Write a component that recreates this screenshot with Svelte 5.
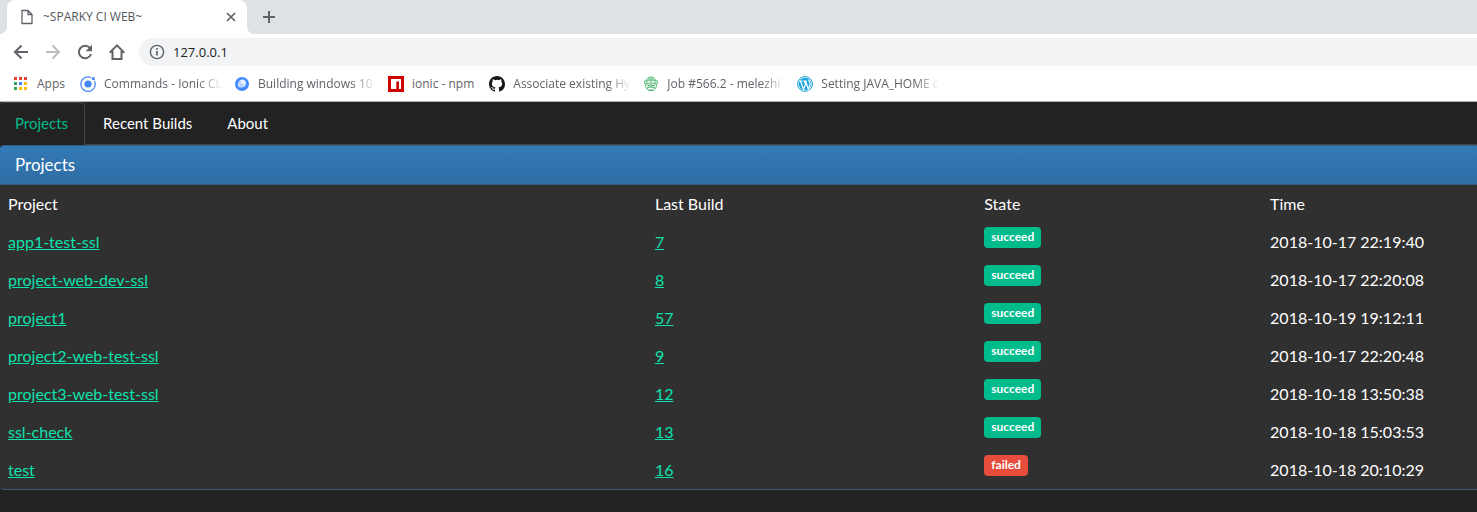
<script>
  const bookmarks = [
    { icon: 'apps', label: 'Apps', cls: '' },
    { icon: 'ionic', label: 'Commands - Ionic CL', cls: 'fade' },
    { icon: 'cordova', label: 'Building windows 10', cls: 'fade' },
    { icon: 'npm', label: 'ionic - npm', cls: '' },
    { icon: 'github', label: 'Associate existing Hy', cls: 'fade' },
    { icon: 'travis', label: 'Job #566.2 - melezhi', cls: 'fade' },
    { icon: 'wordpress', label: 'Setting JAVA_HOME c', cls: 'fade' },
  ];
  const dots = ['#ea4335', '#ea4335', '#ea4335', '#34a053', '#4285f4', '#fbbc05', '#34a053', '#fbbc05', '#fbbc05'];
  const projects = [
    { name: 'app1-test-ssl', build: 7, state: 'succeed', time: '2018-10-17 22:19:40' },
    { name: 'project-web-dev-ssl', build: 8, state: 'succeed', time: '2018-10-17 22:20:08' },
    { name: 'project1', build: 57, state: 'succeed', time: '2018-10-19 19:12:11' },
    { name: 'project2-web-test-ssl', build: 9, state: 'succeed', time: '2018-10-17 22:20:48' },
    { name: 'project3-web-test-ssl', build: 12, state: 'succeed', time: '2018-10-18 13:50:38' },
    { name: 'ssl-check', build: 13, state: 'succeed', time: '2018-10-18 15:03:53' },
    { name: 'test', build: 16, state: 'failed', time: '2018-10-18 20:10:29' },
  ];
</script>

<header class="browser">
  <div class="strip">
    <div class="tab">
      <svg width="12" height="16" viewBox="0 0 12 16" fill="none" stroke="#5f6368" stroke-width="1.3"><path d="M1 1.5h6l4 4v9H1zM7 1.5v4h4" /></svg>
      <span class="title">~SPARKY CI WEB~</span>
      <button aria-label="Close tab"><svg width="10" height="10" viewBox="0 0 10 10" stroke="#5f6368" stroke-width="1.7"><path d="M1 1l8 8M9 1L1 9" /></svg></button>
    </div>
    <button class="new" aria-label="New tab"><svg width="12" height="12" viewBox="0 0 12 12" stroke="#5f6368" stroke-width="2"><path d="M6 0v12M0 6h12" /></svg></button>
  </div>
  <div class="toolbar">
    <button aria-label="Back"><svg width="16" height="16" viewBox="0 0 16 16" fill="none" stroke="#5f6368" stroke-width="2"><path d="M15 8H2.500M8.500 1.500L2 8l6.500 6.500" /></svg></button>
    <button aria-label="Forward"><svg width="16" height="16" viewBox="0 0 16 16" fill="none" stroke="#bcbec0" stroke-width="2"><path d="M1 8h12.500M7.500 1.500L14 8l-6.500 6.500" /></svg></button>
    <button aria-label="Reload"><svg width="16" height="16" viewBox="0 0 16 16"><path d="M13 4.200A6.200 6.200 0 1 0 14 10" fill="none" stroke="#5f6368" stroke-width="2" /><path d="M15 .8v6.400H8.600z" fill="#5f6368" /></svg></button>
    <button aria-label="Home"><svg width="16" height="16" viewBox="0 0 16 16" fill="none" stroke="#5f6368" stroke-width="2"><path d="M.7 8.700L8 1.400l7.300 7.300M3.500 7v8h9V7" /></svg></button>
    <label class="address">
      <svg width="16" height="16" viewBox="0 0 16 16" fill="none" stroke="#5f6368" stroke-width="1.4"><circle cx="8" cy="8" r="6.600" /><path d="M8 7v4.500M8 4v1.700" stroke-width="1.700" /></svg>
      <input aria-label="Address" value="127.0.0.1" />
    </label>
  </div>
  <nav class="bookmarks" aria-label="Bookmarks">
    {#each bookmarks as b}
      <a href="#bookmark" class={b.cls}>
        <svg width="16" height="16" viewBox="0 0 16 16">
          {#if b.icon === 'apps'}
            {#each dots as c, i}<rect x={1 + (i % 3) * 5} y={1 + Math.floor(i / 3) * 5} width="3" height="3" fill={c} />{/each}
          {:else if b.icon === 'ionic'}
            <path d="M11.200 1.700A7.200 7.200 0 1 0 14.500 5" fill="none" stroke="#4b8bf5" stroke-width="1.300" /><circle cx="8" cy="8" r="3.600" fill="#4285f4" /><circle cx="13.300" cy="2.700" r="1.600" fill="#4b8bf5" />
          {:else if b.icon === 'cordova'}
            <circle cx="8" cy="8" r="7" fill="#448aff" /><path d="M6 4.300C8 2.900 11 3.500 11.800 6c.7 2.600-.8 4.900-3.300 5.300-2.100.5-4.700-.4-4.700-1.900C3.800 8.300 4.600 5.300 6 4.300z" fill="#e6f0ff" /><path d="M6.200 5.200c-1 2.800 1.200 4.800 4.600 3.700M4.300 8.500c.8 1.200 2 1.800 3.500 1.900" fill="none" stroke="#79aaff" stroke-width=".9" />
          {:else if b.icon === 'npm'}
            <path d="M0 0h16v16H0z" fill="#c00" /><path d="M3 3h10v10h-2V5.500H8.300V13H3z" fill="#fff" />
          {:else if b.icon === 'github'}
            <path fill="#191717" d="M8 0C3.580 0 0 3.580 0 8c0 3.540 2.290 6.530 5.470 7.590.4.070.55-.17.55-.38 0-.19-.01-.82-.01-1.490-2.010.37-2.530-.49-2.690-.94-.09-.23-.48-.94-.82-1.130-.28-.15-.68-.52-.01-.53.63-.01 1.080.58 1.230.82.72 1.210 1.870.87 2.330.66.07-.52.28-.87.51-1.070-1.780-.2-3.640-.89-3.640-3.950 0-.87.31-1.590.82-2.150-.08-.2-.36-1.020.08-2.120 0 0 .67-.21 2.200.82a7.400 7.400 0 0 1 4 0c1.530-1.040 2.200-.82 2.200-.82.44 1.100.16 1.920.08 2.120.51.56.82 1.270.82 2.150 0 3.070-1.870 3.750-3.650 3.950.29.25.54.73.54 1.480 0 1.070-.01 1.930-.01 2.200 0 .21.15.46.55.38A8.010 8.010 0 0 0 16 8c0-4.420-3.580-8-8-8z" />
          {:else if b.icon === 'travis'}
            <g fill="none" stroke="#45b066" stroke-width=".9"><path d="M3.500 3.800C5 .2 11 .2 12.500 3.800" /><path d="M1.500 5c4-1.300 9-1.300 13 0l-.5 3c-4-1.300-8-1.300-12 0zM2.700 8v2.500c1 5.500 9.600 5.500 10.600 0V8M6 1.500v3M10 1.500v3M8 1v5.500M4 5v2M12 5v2" /><path d="M4.300 9.300h2.500M9.200 9.300h2.500M4 12.300c2-2 6-2 8 0M6 14h4M8 8v2" stroke-width="1.200" /></g>
          {:else}
            <circle cx="8" cy="8" r="7.400" fill="#fff" stroke="#1ba1d6" stroke-width="1" /><circle cx="8" cy="8" r="6.300" fill="#18a5dc" /><path d="M2.200 5h3.300M3.500 5l3 8.500L8.500 8 7.300 5M6.200 5h3.600M8.500 5l2.800 8.300 1.800-5.100c.5-2-1.800-2.500-1-4.500" fill="none" stroke="#fff" stroke-width="1.200" />
          {/if}
        </svg>
        <span>{b.label}</span>
      </a>
    {/each}
  </nav>
</header>

<main>
  <nav class="tabs" aria-label="Main">
    <a class="active" href="#projects">Projects</a>
    <a href="#recent">Recent Builds</a>
    <a href="#about">About</a>
  </nav>
  <section class="panel">
    <h1>Projects</h1>
    <table>
      <thead><tr><th class="c1">Project</th><th class="c2">Last Build</th><th class="c3">State</th><th>Time</th></tr></thead>
      <tbody>
        {#each projects as p}
          <tr>
            <td><a href="#project">{p.name}</a></td>
            <td><a href="#build">{p.build}</a></td>
            <td class="state"><span class="label" class:failed={p.state === 'failed'}>{p.state}</span></td>
            <td>{p.time}</td>
          </tr>
        {/each}
      </tbody>
    </table>
  </section>
</main>

<style>
  :global(body) { margin: 0; background: #222; }
  button { border: 0; padding: 0; background: none; display: flex; }
  svg { flex: none; display: block; }
  .browser { font: 12px/16px "Open Sans", "Noto Sans", sans-serif; color: #5f6368; background: #fff; border-bottom: 1px solid #b6b4b6; overflow: hidden; }
  .strip { display: flex; align-items: center; height: 34px; background: #dee1e6; padding-left: 7px; }
  .tab { display: flex; align-items: center; gap: 10px; box-sizing: border-box; width: 240px; height: 34px; padding: 0 11px 0 14px; background: #fff; border-radius: 8px 8px 0 0; position: relative; }
  .tab::before, .tab::after { content: ""; position: absolute; bottom: 0; width: 8px; height: 8px; }
  .tab::before { left: -8px; background: radial-gradient(circle at 0 0, transparent 8px, #fff 8px); }
  .tab::after { right: -8px; background: radial-gradient(circle at 100% 0, transparent 8px, #fff 8px); }
  .title { flex: 1; white-space: nowrap; color: #54585c; }
  .new { margin-left: 16px; }
  .toolbar { display: flex; align-items: center; gap: 16px; height: 36px; padding-left: 13px; }
  .address { display: flex; align-items: center; gap: 8px; flex: 1; height: 28px; margin-left: -2px; padding-left: 10px; border-radius: 14px 0 0 14px; background: #f1f3f4; }
  input { flex: 1; min-width: 0; border: 0; padding: 0; outline: 0; background: none; font: 13px/18px "Open Sans", sans-serif; color: #202124; }
  .bookmarks { display: flex; align-items: center; gap: 15px; height: 28px; padding: 0 0 3px 13px; }
  .bookmarks a { display: flex; align-items: center; gap: 8px; color: #5f6368; text-decoration: none; }
  .bookmarks span { white-space: nowrap; }
  .fade span { width: 120px; margin-right: -5px; mask-image: linear-gradient(90deg, #000 94px, transparent 118px); }
  main { color: #fff; font: 16px/21px Lato, sans-serif; }
  .tabs { display: flex; gap: 2px; border-bottom: 1px solid #464545; font-size: 15px; }
  .tabs a { padding: 10px 15px; color: #fff; text-decoration: none; border: 1px solid transparent; border-bottom: 0; }
  .tabs a.active { margin-bottom: -1px; padding-right: 16px; color: #00bc8c; background: #222; border-color: #464545; border-left: 0; border-radius: 4px 4px 0 0; }
  .tabs a:last-child { padding-left: 16px; }
  .panel { border: solid #375a7f; border-width: 1px 0; border-radius: 4px 0 0 4px; background: #303030; overflow: hidden; }
  h1 { margin: 0; padding: 9px 15px; font-size: 17px; line-height: 20px; font-weight: 400; background: linear-gradient(#337ab7, #2e6da4); border-bottom: 1px solid #375a7f; }
  table { width: 100%; border-collapse: collapse; table-layout: fixed; }
  th, td { box-sizing: border-box; text-align: left; font-weight: 400; padding: 8px 8px 9px; vertical-align: top; }
  .c1 { width: 43.8%; }
  .c2 { width: 22.3%; }
  .c3 { width: 19.35%; }
  td a { color: #0ce3ac; text-decoration: underline; }
  td.state { padding: 4px 8px 0; }
  .label { display: inline-block; padding: 0 7px 1px; border-radius: 4px; background: #00bc8c; font-size: 12px; line-height: 20px; font-weight: 700; vertical-align: top; }
  .label.failed { background: #e74c3c; }
</style>
